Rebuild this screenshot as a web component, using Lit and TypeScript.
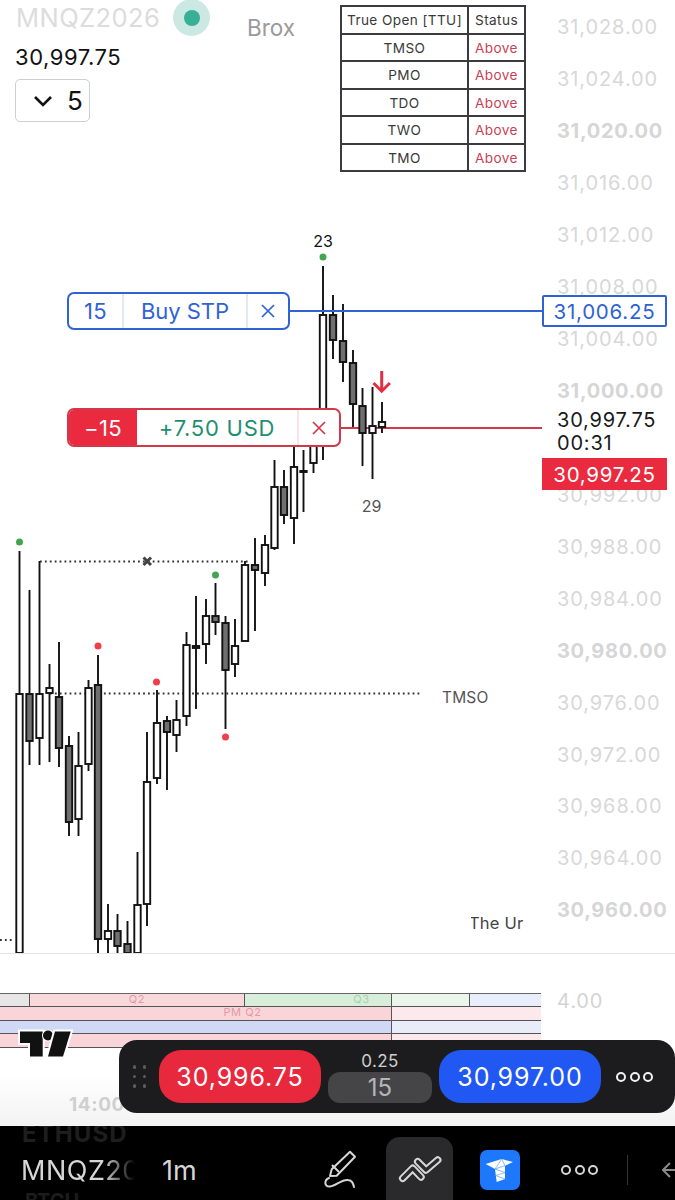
import { LitElement, html, css, svg } from "lit";
import { customElement } from "lit/decorators.js";

// x, wickTop, bodyTop, bodyBottom, wickBottom, dark
const CANDLES: [number, number, number, number, number, number][] = [
  [19.5, 551, 694, 953, 953, 0],
  [29.5, 590, 694, 741, 765, 1],
  [39.5, 561, 694, 738, 765, 0],
  [49.5, 664, 688, 693, 762, 0],
  [59, 642, 697, 748, 767, 1],
  [69, 736, 746, 822, 836, 1],
  [78.5, 732, 766, 819, 836, 0],
  [88.5, 680, 688, 764, 771, 0],
  [98, 655, 685, 939, 953, 1],
  [108, 904, 931, 939, 953, 0],
  [117.5, 914, 931, 946, 953, 1],
  [127.5, 921, 944, 953, 953, 1],
  [137.5, 852, 905, 953, 953, 0],
  [147, 732, 782, 904, 926, 0],
  [157, 690, 723, 778, 784, 0],
  [167, 716, 721, 732, 790, 1],
  [176.5, 700, 720, 735, 752, 0],
  [186.5, 632, 645, 716, 726, 0],
  [196, 596, 646, 648, 709, 1],
  [206, 599, 616, 644, 664, 0],
  [215.5, 583, 616, 622, 635, 1],
  [225.5, 616, 623, 670, 729, 1],
  [235, 619, 646, 664, 677, 0],
  [245, 561, 565, 641, 641, 0],
  [255, 538, 565, 570, 631, 1],
  [265, 535, 545, 573, 586, 0],
  [274.5, 460, 487, 548, 550, 0],
  [284, 470, 487, 515, 524, 1],
  [294, 430, 467, 518, 544, 0],
  [303.5, 450, 471, 472, 512, 1],
  [313.5, 425, 425, 463, 473, 0],
  [323, 266, 315, 446, 460, 0],
  [333, 295, 315, 340, 359, 1],
  [343, 304, 341, 362, 382, 1],
  [353, 350, 363, 404, 427, 1],
  [362.5, 388, 406, 433, 466, 1],
  [372.5, 387, 426, 433, 479, 0],
  [382, 402, 422, 427, 433, 0],
];

const AXIS: [string, number, boolean][] = [
  ["31,028.00", 27, false],
  ["31,024.00", 79, false],
  ["31,020.00", 131, true],
  ["31,016.00", 183, false],
  ["31,012.00", 235, false],
  ["31,008.00", 287, false],
  ["31,004.00", 339, false],
  ["31,000.00", 391, true],
  ["30,992.00", 495, false],
  ["30,988.00", 547, false],
  ["30,984.00", 599, false],
  ["30,980.00", 651, true],
  ["30,976.00", 703, false],
  ["30,972.00", 755, false],
  ["30,968.00", 806, false],
  ["30,964.00", 858, false],
  ["30,960.00", 910, true],
];

const DOTS: [number, number, string][] = [
  [323, 257, "#43a552"],
  [19.5, 542, "#43a552"],
  [215.5, 575, "#43a552"],
  [98, 646, "#ef3f4c"],
  [156.5, 682, "#ef3f4c"],
  [225.5, 737, "#ef3f4c"],
];

const ROWS = ["TMSO", "PMO", "TDO", "TWO", "TMO"];

@customElement("app-root")
export class AppRoot extends LitElement {
  static styles = css`
    :host {
      display: block;
      width: 675px;
      height: 1200px;
      background: #fff;
      font-family: Inter, "Liberation Sans", sans-serif;
      overflow: hidden;
    }
    .stage { position: relative; width: 675px; height: 1200px; display: flex; flex-direction: column; }
    .chart { position: relative; height: 953px; flex: none; border-bottom: 1.5px solid #e6e6e6; box-sizing: content-box; }
    .plot { position: absolute; left: 0; top: 0; }
    .plot text { font-family: Inter, "Liberation Sans", sans-serif; }
    .ax { font-size: 20px; fill: #d8d8d8; letter-spacing: 0.9px; }
    .ax.b { font-weight: 700; fill: #d6d6d6; letter-spacing: 0.7px; }
    .legend { position: absolute; left: 15px; top: 0; display: flex; flex-direction: column; align-items: flex-start; }
    .sym-row { display: flex; align-items: center; height: 36px; }
    .sym { font-size: 25.5px; color: #dcdcdc; line-height: 36px; letter-spacing: 0.45px; margin-left: 1px; }
    .status { width: 37px; height: 37px; border-radius: 50%; background: #cbe8e3; display: flex; align-items: center; justify-content: center; margin-left: 13px; margin-top: -1px; }
    .status i { display: block; width: 16px; height: 16px; border-radius: 50%; background: #38b097; }
    .last { font-size: 22px; color: #111; line-height: 26px; margin-top: 8px; letter-spacing: 0.55px; }
    .interval { margin-top: 9px; width: 75px; height: 43px; box-sizing: border-box; border: 1.5px solid #cfcfcf; border-radius: 5px; display: flex; align-items: center; padding-left: 17px; gap: 14px; color: #111; font-size: 26px; }
    .brox { position: absolute; left: 247px; top: 14px; font-size: 22.5px; line-height: 27px; color: #9a9a9a; }
    table { position: absolute; left: 340px; top: 5px; width: 186px; height: 166px; border-collapse: collapse; background: #fff; table-layout: fixed; }
    td { border: 2px solid #3a3a40; padding: 1px 0 0; text-align: center; font-size: 13.6px; line-height: 16px; color: #3a3a3a; height: 24.5px; letter-spacing: 0.4px; }
    td:first-child { width: 125px; }
    td.up { color: #c93f55; }
    .tag { position: absolute; box-sizing: border-box; display: flex; align-items: stretch; background: #fff; border-radius: 7px; overflow: hidden; font-size: 22px; letter-spacing: 0.45px; }
    .tag > span { display: flex; align-items: center; justify-content: center; }
    .buy { left: 67px; top: 292px; width: 223px; height: 38px; border: 2px solid #2f63d4; color: #2f63d4; }
    .buy .q { width: 53px; border-right: 2px solid #e3e8f5; }
    .buy .n { flex: 1; border-right: 2px solid #e3e8f5; letter-spacing: -0.05px; }
    .buy .x { width: 40px; }
    .pos { left: 67px; top: 408px; width: 274px; height: 39px; border: 2px solid #d2374a; }
    .pos .q { width: 68px; background: #ea2b3f; color: #fff; }
    .pos .n { flex: 1; color: #1f8f72; border-right: 2px solid #f6e4e6; letter-spacing: 0.75px; }
    .pos .x { width: 40px; }
    .pt { position: absolute; box-sizing: border-box; left: 542px; width: 125px; height: 32px; display: flex; align-items: center; justify-content: center; font-size: 20.5px; letter-spacing: 0.75px; }
    .pt.blue { top: 295px; background: #fff; border: 2px solid #2f63d4; color: #2f63d4; border-radius: 2px; }
    .pt.red { top: 458px; background: #ea2b3f; color: #fff; }
    .cur { position: absolute; left: 557px; top: 409px; font-size: 20px; line-height: 23px; color: #1a1a1a; letter-spacing: 0.8px; background: #fff; }
    .pane { position: relative; flex: none; height: 172px; background: linear-gradient(#fff 70%, #f3f3f3); }
    .bars { position: absolute; left: 0; top: 39px; width: 541px; display: grid; grid-template-rows: repeat(4, 13.4px); border-top: 1.5px solid #666; }
    .row { display: flex; border-bottom: 1.5px solid #555; box-sizing: border-box; font-size: 11px; line-height: 11.9px; overflow: hidden; }
    .row span { display: block; box-sizing: border-box; text-align: center; letter-spacing: 0.6px; }
    .sep { border-right: 1.5px solid #555; }
    .v4 { position: absolute; left: 557px; top: 35px; font-size: 20px; line-height: 24px; color: #d4d4d4; letter-spacing: 0.9px; }
    .tv { position: absolute; left: 16px; top: 73px; }
    .t14 { position: absolute; left: 69px; top: 139px; font-weight: 700; font-size: 19px; color: #cfcfcf; line-height: 24px; letter-spacing: 0.6px; }
    .trade { position: absolute; left: 119px; top: 86px; width: 556px; height: 73px; background: #1c1c1e; border-radius: 18px; display: flex; align-items: center; box-sizing: border-box; }
    .grip { width: 40px; display: grid; grid-template-columns: 3px 3px; gap: 6px 7px; justify-content: center; flex: none; }
    .grip i { width: 3.5px; height: 3.5px; border-radius: 50%; background: #5d5d60; }
    .btn { width: 162px; height: 53px; border-radius: 22px; color: #fff; font-size: 25px; display: flex; align-items: center; justify-content: center; flex: none; letter-spacing: 0.9px; }
    .btn.sell { background: #e8283c; }
    .btn.buyb { background: #2158f4; }
    .qty { width: 104px; margin: 0 7px; display: flex; flex-direction: column; align-items: center; flex: none; }
    .qty b { font-weight: 400; font-size: 17px; line-height: 22px; color: #cfcfcf; letter-spacing: 0.4px; }
    .qty span { width: 104px; height: 31px; border-radius: 12px; background: #454547; color: #b5b5b5; font-size: 24px; display: flex; align-items: center; justify-content: center; }
    .more { display: flex; gap: 3.5px; margin-left: 15px; }
    .more i { width: 10px; height: 10px; box-sizing: border-box; border-radius: 50%; border: 2.2px solid #f0f0f0; }
    .bar { position: relative; flex: 1; background: #000; display: flex; align-items: center; overflow: hidden; color: #d6d6d6; padding-left: 21px; }
    .ghost { position: absolute; left: 22px; top: -5px; font-size: 24px; line-height: 26px; font-weight: 700; color: #1e1e1e; letter-spacing: 1.1px; }
    .ghost2 { position: absolute; left: 25px; top: 63px; font-size: 20px; line-height: 24px; font-weight: 700; color: #1c1c1c; }
    .sy { width: 114px; flex: none; overflow: hidden; white-space: nowrap; font-size: 27px; letter-spacing: 0.5px; -webkit-mask-image: linear-gradient(90deg, #000 72%, transparent); mask-image: linear-gradient(90deg, #000 72%, transparent); margin-top: 14px; }
    .tf { font-size: 27px; margin-left: 27px; width: 161px; flex: none; margin-top: 14px; }
    .icon { flex: none; margin-top: 14px; }
    .active { flex: none; width: 67px; height: 64px; margin: 11px 0 0 25px; background: #2a2a2c; border-radius: 14px 14px 0 0; display: flex; align-items: center; justify-content: center; }
    .logo { width: 40px; height: 40px; margin-left: 27px; margin-top: 14px; border-radius: 7px; background: #1e78fb; flex: none; display: flex; }
    .dots { display: flex; gap: 3.5px; margin-left: 41px; margin-top: 14px; flex: none; }
    .dots i { width: 10px; height: 10px; box-sizing: border-box; border-radius: 50%; border: 2.2px solid #d6d6d6; }
    .rule { width: 1px; height: 30px; background: #333; margin-left: 29px; margin-top: 14px; flex: none; }
    .arrow { margin-left: 34px; margin-top: 14px; flex: none; }
  `;

  private candles() {
    return CANDLES.map(([x, wt, bt, bb, wb, d]) => {
      const w = 6.4;
      return svg`
        <line x1=${x} x2=${x} y1=${wt} y2=${bt} stroke="#111" stroke-width="1.9"></line>
        <line x1=${x} x2=${x} y1=${bb} y2=${wb} stroke="#111" stroke-width="1.9"></line>
        <rect x=${x - w / 2} y=${bt} width=${w} height=${Math.max(bb - bt, 1)}
          fill=${d ? "#6f6f6f" : "#fff"} stroke="#111" stroke-width="1.9"></rect>`;
    });
  }

  private plot() {
    return html`<svg class="plot" width="675" height="953" viewBox="0 0 675 953">
      ${AXIS.map(([t, y, b]) => svg`<text class=${b ? "ax b" : "ax"} x="557" y=${y + 7}>${t}</text>`)}
      <line x1="40" x2="248" y1="561.5" y2="561.5" stroke="#333" stroke-width="1.8" stroke-dasharray="1.8 3.1"></line>
      <line x1="50" x2="420" y1="693.5" y2="693.5" stroke="#333" stroke-width="1.8" stroke-dasharray="1.8 3.1"></line>
      <line x1="0" x2="14" y1="940" y2="940" stroke="#333" stroke-width="1.8" stroke-dasharray="1.8 3.1"></line>
      <line x1="340" x2="542" y1="428" y2="428" stroke="#d2374a" stroke-width="1.8"></line>
      ${this.candles()}
      <line x1="290" x2="542" y1="311" y2="311" stroke="#2f63d4" stroke-width="1.8"></line>
      <path d="M143.500 557.500l7.500 7.500M151 557.500l-7.500 7.500" stroke="#444" stroke-width="3" fill="none"></path>
      ${DOTS.map(([x, y, c]) => svg`<circle cx=${x} cy=${y} r="3.500" fill=${c}></circle>`)}
      <path d="M381.700 371v20M373.500 383l8.200 8.200 8.200-8.200" stroke="#e52d42" stroke-width="3" fill="none"></path>
      <text x="323" y="246.500" text-anchor="middle" font-size="16" fill="#111">23</text>
      <text x="371.500" y="512" text-anchor="middle" font-size="16" fill="#555">29</text>
      <text x="442" y="703" font-size="15.500" letter-spacing="0.15" fill="#555">TMSO</text>
      <svg x="471" y="910" width="54" height="26" viewBox="471 910 54 26"><text x="469" y="928.500" font-size="16.500" letter-spacing="0.2" fill="#444">The Ur</text></svg>
    </svg>`;
  }

  private closeIcon(color: string) {
    return html`<svg width="14" height="14" viewBox="0 0 14 14"><path d="M1 1l12 12M13 1L1 13" stroke=${color} stroke-width="1.700"></path></svg>`;
  }

  render() {
    const seg = (w: number, bg: string, sep = false, label = "", color = "", pad = 0) =>
      html`<span class=${sep ? "sep" : ""} style="width:${w}px;background:${bg};color:${color};padding-left:${pad}px">${label}</span>`;
    return html`<div class="stage">
      <div class="chart">
        ${this.plot()}
        <div class="legend">
          <div class="sym-row"><span class="sym">MNQZ2026</span><span class="status"><i></i></span></div>
          <div class="last">30,997.75</div>
          <div class="interval">
            <svg width="20" height="12" viewBox="0 0 20 12"><path d="M2 2l8 8 8-8" stroke="#111" stroke-width="2.600" fill="none"></path></svg>
            <span>5</span>
          </div>
        </div>
        <div class="brox">Brox</div>
        <table>
          <tr><td>True Open [TTU]</td><td>Status</td></tr>
          ${ROWS.map((r) => html`<tr><td>${r}</td><td class="up">Above</td></tr>`)}
        </table>
        <div class="tag buy"><span class="q">15</span><span class="n">Buy STP</span><span class="x">${this.closeIcon("#2f63d4")}</span></div>
        <div class="tag pos"><span class="q">−15</span><span class="n">+7.50 USD</span><span class="x">${this.closeIcon("#d2374a")}</span></div>
        <div class="pt blue">31,006.25</div>
        <div class="cur">30,997.75<br />00:31</div>
        <div class="pt red">30,997.25</div>
      </div>
      <div class="pane">
        <div class="bars">
          <div class="row">
            ${seg(30, "#e6e6e6", true)}${seg(215, "#f9d8dc", true, "Q2", "#e39aa5")}${seg(147, "#d9eeda", true, "Q3", "#a3d3ad", 87)}${seg(78, "#ebf5ea", true)}${seg(71, "#e8eefb")}
          </div>
          <div class="row">${seg(392, "#f9d5da", true, "PM Q2", "#e39aa5", 94)}${seg(149, "#fce9eb")}</div>
          <div class="row">${seg(392, "#cfd9f6", true)}${seg(149, "#e9edf9")}</div>
          <div class="row">${seg(392, "#f9d5da", true)}${seg(149, "#fce9eb")}</div>
        </div>
        <div class="v4">4.00</div>
        <svg class="tv" width="60" height="34" viewBox="0 0 60 34">
          <path d="M4 4.500h22.700v25H14V16H4z" fill="#111" stroke="#fff" stroke-width="4" paint-order="stroke"></path>
          <circle cx="32" cy="8.500" r="5" fill="#111" stroke="#fff" stroke-width="2" paint-order="stroke"></circle>
          <path d="M39 4.500h15.700L47 29.500H32z" fill="#111" stroke="#fff" stroke-width="4" paint-order="stroke"></path>
        </svg>
        <div class="t14">14:00</div>
        <div class="trade">
          <div class="grip"><i></i><i></i><i></i><i></i><i></i><i></i></div>
          <div class="btn sell">30,996.75</div>
          <div class="qty"><b>0.25</b><span>15</span></div>
          <div class="btn buyb">30,997.00</div>
          <div class="more"><i></i><i></i><i></i></div>
        </div>
      </div>
      <div class="bar">
        <div class="ghost">ETHUSD</div>
        <div class="ghost2">BTCU</div>
        <div class="sy">MNQZ2026</div>
        <div class="tf">1m</div>
        <svg class="icon" width="38" height="40" viewBox="0 0 38 40" fill="none" stroke="#d6d6d6" stroke-width="2" stroke-linejoin="round" stroke-linecap="round">
          <path d="M27 1.700L32 6.700 13.700 25.700 7 26 8.700 19.300z"></path>
          <path d="M9.500 15.500l6 6"></path>
          <path d="M6 28c-5 2-5 9 1 8.500 6-.5 12-7.500 18-6.500 4 .5 5 3 6 7"></path>
        </svg>
        <div class="active">
          <svg width="44" height="28" viewBox="0 0 44 28" fill="none" stroke-linejoin="round" stroke-linecap="round">
            <path d="M4.700 23.300L14.700 13.300 23 22M19.700 6.700L28 15 39.700 5" stroke="#d6d6d6" stroke-width="7.500"></path>
            <path d="M4.700 23.300L14.700 13.300 23 22M19.700 6.700L28 15 39.700 5" stroke="#2a2a2c" stroke-width="3.500"></path>
          </svg>
        </div>
        <div class="logo">
          <svg width="40" height="40" viewBox="0 0 40 40">
            <path d="M5.700 14L21.700 9 33 12 25 15.700V29L16.700 32 15 19z" fill="#fff"></path>
            <path d="M15 19L25 15.700 21.700 9M15 19L25 22.500 15.800 25.500 25 29M15 19L21.700 9" stroke="#6fa9fb" stroke-width="0.800" fill="none"></path>
          </svg>
        </div>
        <div class="dots"><i></i><i></i><i></i></div>
        <div class="rule"></div>
        <svg class="arrow" width="14" height="16" viewBox="0 0 14 16" fill="none" stroke="#8a8a8a" stroke-width="2"><path d="M8 1L1 8l7 7M1 8h16"></path></svg>
      </div>
    </div>`;
  }
}
